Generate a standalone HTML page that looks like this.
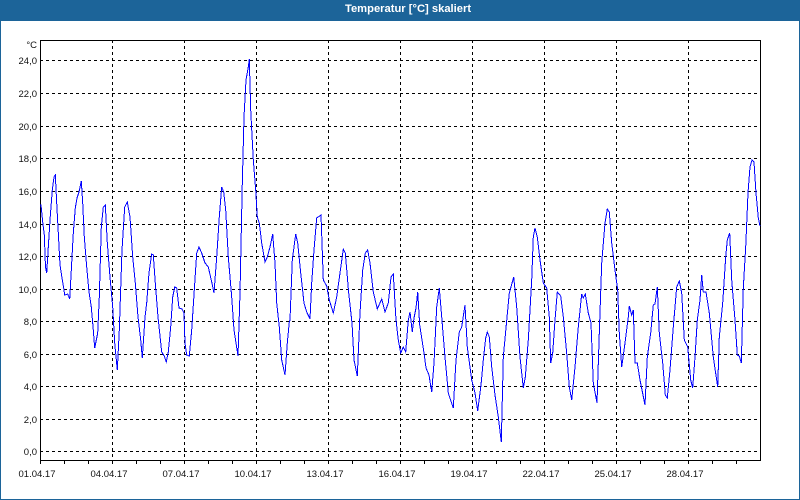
<!DOCTYPE html>
<html><head><meta charset="utf-8"><title>Temperatur</title>
<style>
html,body{margin:0;padding:0;background:#fff}
svg{display:block}
.l{font:9.5px "Liberation Sans",sans-serif;fill:#111}
.t{font:bold 11.2px "Liberation Sans",sans-serif;fill:#fff}
</style></head><body>
<svg width="800" height="500" viewBox="0 0 800 500" xmlns="http://www.w3.org/2000/svg">
<rect width="800" height="500" fill="#fff"/>
<rect x="0" y="0" width="800" height="21" fill="#1c6499"/>
<rect x="0" y="0" width="1" height="500" fill="#1c6499"/>
<rect x="799" y="0" width="1" height="500" fill="#1c6499"/>
<rect x="0" y="499" width="800" height="1" fill="#1c6499"/>
<text class="t" x="408" y="12" text-anchor="middle">Temperatur [°C] skaliert</text>
<g stroke="#000" stroke-width="1" stroke-dasharray="3 3" shape-rendering="crispEdges" fill="none">
<path d="M40 60.5H760M40 93.5H760M40 126.5H760M40 158.5H760M40 191.5H760M40 224.5H760M40 256.5H760M40 289.5H760M40 321.5H760M40 354.5H760M40 386.5H760M40 419.5H760M40 451.5H760"/>
<path d="M112.5 40V460M184.5 40V460M256.5 40V460M328.5 40V460M400.5 40V460M472.5 40V460M544.5 40V460M616.5 40V460M688.5 40V460"/>
</g>
<path d="M40.5 40.5H760.5V460.5H40.5Z" fill="none" stroke="#000" shape-rendering="crispEdges"/>
<path d="M40.5 460V464M64.5 460V464M88.5 460V464M112.5 460V464M136.5 460V464M160.5 460V464M184.5 460V464M208.5 460V464M232.5 460V464M256.5 460V464M280.5 460V464M304.5 460V464M328.5 460V464M352.5 460V464M376.5 460V464M400.5 460V464M424.5 460V464M448.5 460V464M472.5 460V464M496.5 460V464M520.5 460V464M544.5 460V464M568.5 460V464M592.5 460V464M616.5 460V464M640.5 460V464M664.5 460V464M688.5 460V464M712.5 460V464M736.5 460V464" stroke="#000" shape-rendering="crispEdges" fill="none"/>
<polyline fill="none" stroke="#0000ff" stroke-width="1" shape-rendering="crispEdges" points="40,205 41,205 42.7,222 44.3,235 45.3,262 45.7,268 46.7,273 48.3,247 50,220 52.3,190 54,177 55.3,175 56.7,203 58.3,233 60,265 62,278 63.7,288 64.7,295 67.7,294 69.7,299 71.3,270 73.3,233 75.3,208 77,198 79,192 81.3,181 82.7,203 84.3,237 86.7,267 89,292 91.3,307 93.3,330 94.7,348 97.7,333 99.3,297 101.3,227 103.3,207 105.3,205 107.3,243 110,277 112.7,307 114.7,343 117.3,370 119.3,330 122,250 124.7,207 127.3,202 130,217 132.7,257 135.3,283 138,317 140.7,340 142.3,358 145,317 146.7,303 149,273 151.7,254 153.3,255 155.3,283 158,317 160,336 161.7,352 164.3,356 166.3,362 168.3,352 170.7,327 172.7,297 174.7,287 176.7,288 179,308 182,309 184,313 185,343 186.7,355 189.3,356 191.7,330 194.3,290 196.7,253 199,247 201.7,253 205,263 208.3,267 211.7,282 214,293 216.7,257 219.3,217 221.7,187 223.7,192 225.7,210 228.3,257 231.7,297 234,330 238,356 240,293 242.3,183 244,117 246,80 248.3,67 249.3,59 250.7,110 253.3,160 255.7,190 257.3,217 259.3,223 261.7,243 265,262 267.3,257 270,247 272.7,234 275,263 276.7,303 279.3,327 281.7,360 285,375 287.3,343 289.3,322 290,320 292.3,260 295.7,234 297.7,243 300.7,273 304,303 306.7,312 310,319 311.7,283 314,250 316.7,218 321,215 323.3,280 326.7,286 329.3,300 333.3,313 336.7,297 340,273 343.3,249 345.3,253 348.7,293 352,323 354,360 357.3,376 360,313 362.7,270 365.3,253 367.7,250 370,263 373.3,292 377.3,309 381.7,299 385,312 388.3,303 391,277 393.3,274 396,320 398.3,340 400.7,353 403.3,347 405.7,352 408.3,320 410,312 412.3,332 414,318 416,308 417.7,292 419.7,325 424,353 426,368 429,375 431.7,392 434,363 436.7,307 439.3,288 441.7,317 445,357 448.3,393 453.3,408 456,360 459.3,332 461.7,327 465,305 467.3,347 471.7,380 475,393 477.7,411 481,385 483.3,360 485.7,338 487.3,332 489.3,337 491.7,367 495,395 498.3,417 501.3,442 503.3,357 506,328 509.3,293 513.7,277 516.7,307 520,357 523.3,388 525.3,377 528.3,340 531.7,280 533.3,237 535,228 537.3,237 540,260 543.3,283 546.7,288 549.3,317 550.7,363 552.7,353 555,320 557.3,292 560.7,296 563.3,317 566.7,353 569.3,387 571.7,400 575,367 578.3,327 581.7,294 583.3,298 585.3,294 588.3,313 591,323 593.3,383 597,403 599.3,333 601.7,263 605,223 607.3,209 609.3,212 611.7,243 615,270 617.7,290 619.3,333 621.7,367 625,343 628.3,317 629.3,306 631.7,315 633.3,310 635,363 637.3,363 640,380 645,405 647.3,357 650.7,333 653.3,305 655,304 657.3,287 659.3,333 662.7,363 665.3,395 667.3,398 670,370 673.3,327 676.7,287 679.3,281 681.7,293 684.3,340 687.7,347 690.7,380 692.7,388 695,357 697.3,320 700,300 701.7,275 703.3,292 706,292 709.3,313 713.3,357 717.7,387 719.3,337 722.7,303 725.7,257 727.3,240 729.7,233 731.7,280 735,320 737.3,355 739.3,356 741.3,363 743.3,288 745.7,247 748,193 750,167 752,160 754,162 756,193 758.3,218 760,226"/>
<g text-anchor="end">
<text class="l" x="37" y="48">°C</text>
<text class="l" x="37" y="64">24,0</text>
<text class="l" x="37" y="97">22,0</text>
<text class="l" x="37" y="130">20,0</text>
<text class="l" x="37" y="162">18,0</text>
<text class="l" x="37" y="195">16,0</text>
<text class="l" x="37" y="228">14,0</text>
<text class="l" x="37" y="260">12,0</text>
<text class="l" x="37" y="293">10,0</text>
<text class="l" x="37" y="325">8,0</text>
<text class="l" x="37" y="358">6,0</text>
<text class="l" x="37" y="390">4,0</text>
<text class="l" x="37" y="423">2,0</text>
<text class="l" x="37" y="455">0,0</text>
</g>
<g text-anchor="middle">
<text class="l" x="37" y="477">01.04.17</text>
<text class="l" x="109" y="477">04.04.17</text>
<text class="l" x="181" y="477">07.04.17</text>
<text class="l" x="253" y="477">10.04.17</text>
<text class="l" x="325" y="477">13.04.17</text>
<text class="l" x="397" y="477">16.04.17</text>
<text class="l" x="469" y="477">19.04.17</text>
<text class="l" x="541" y="477">22.04.17</text>
<text class="l" x="613" y="477">25.04.17</text>
<text class="l" x="685" y="477">28.04.17</text>
</g>
</svg>
</body></html>
